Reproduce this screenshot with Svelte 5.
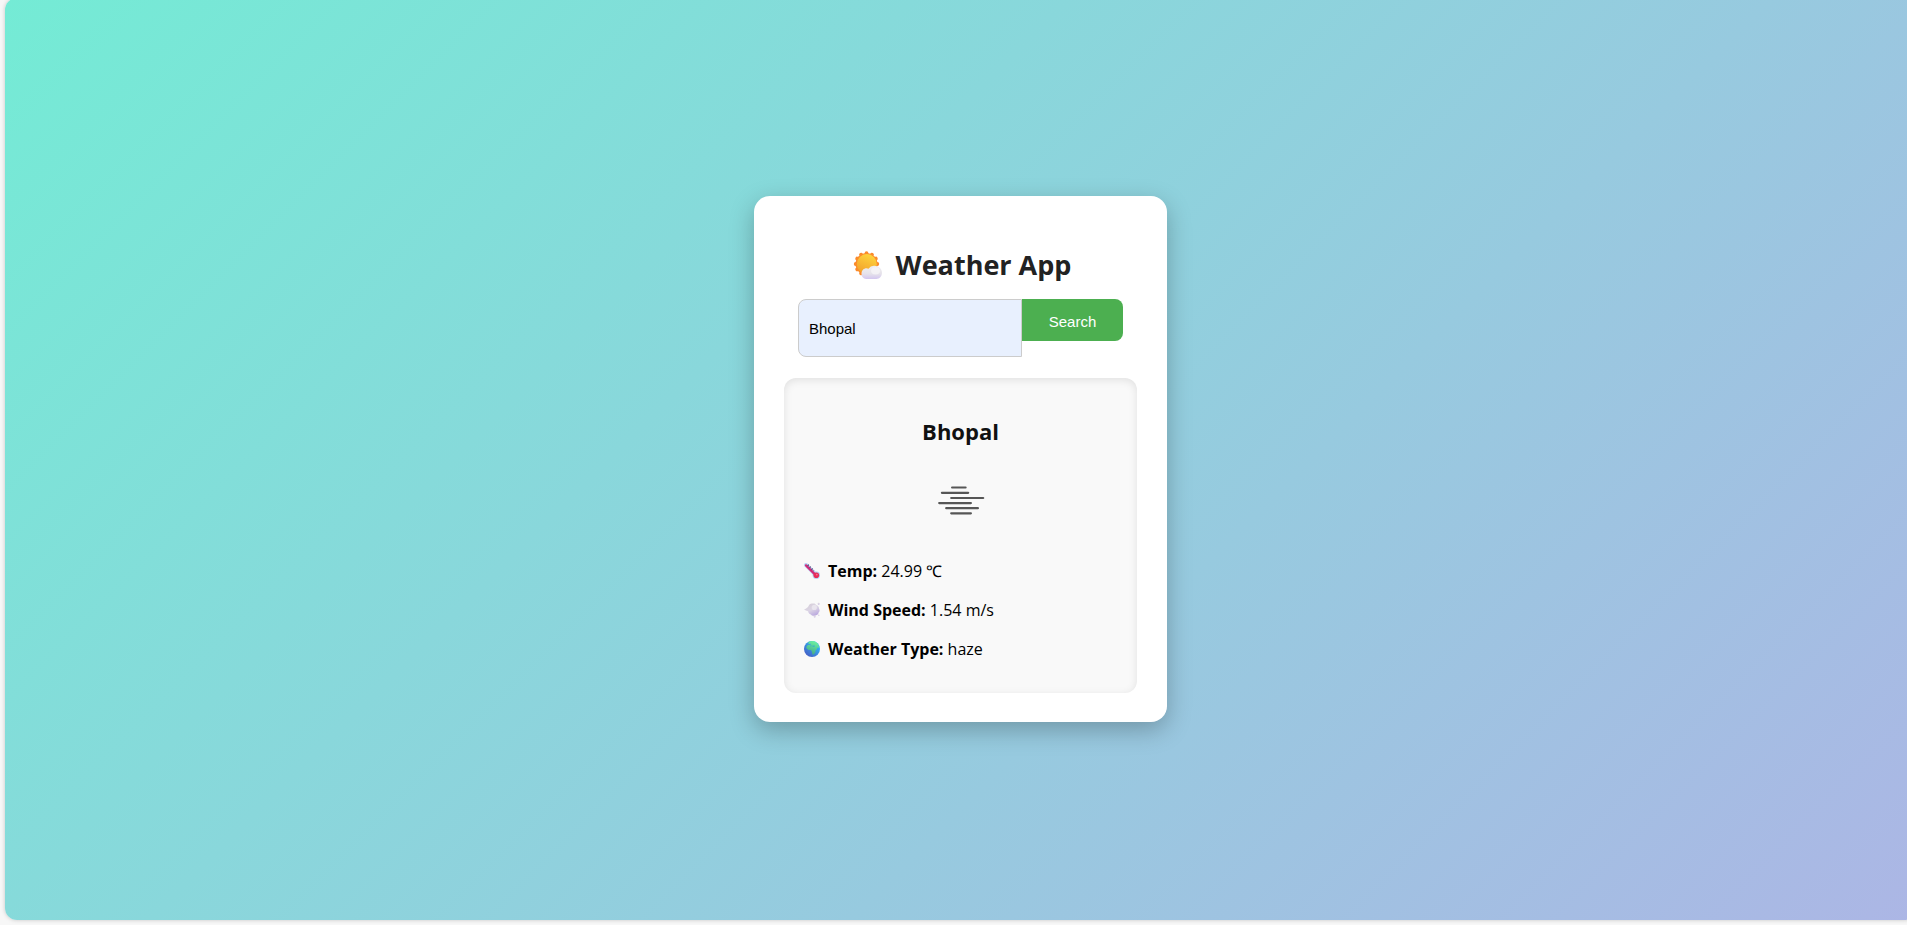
<script>
  let query = $state('Bhopal');
  let weather = $state({ city: 'Bhopal', temp: 24.99, wind: 1.54, type: 'haze' });

  function search(event) {
    event.preventDefault();
    if (query.trim()) weather.city = query.trim();
  }
</script>

<main class="page">
  <div class="backdrop">
    <section class="card">
      <h1>
        <svg class="logo" viewBox="-4 0 32 28" aria-hidden="true">
          <defs>
            <linearGradient id="sun" x1="0.7" y1="0" x2="0.3" y2="1">
              <stop offset="0" stop-color="#fed53c" />
              <stop offset="1" stop-color="#f2a02c" />
            </linearGradient>
            <linearGradient id="cloud" x1="0" y1="0" x2="0" y2="1">
              <stop offset="0" stop-color="#f0eff2" />
              <stop offset="0.6" stop-color="#e6e3ea" />
              <stop offset="1" stop-color="#d3c6f0" />
            </linearGradient>
          </defs>
          <g fill="#fb8b2b">
            <circle cx="12.5" cy="13" r="11" />
            {#each Array(12) as _, i}
              <circle cx="12.5" cy="2.2" r="1.900" transform="rotate({i * 30} 12.5 13)" />
            {/each}
          </g>
          <circle cx="12.8" cy="13" r="10" fill="url(#sun)" />
          <path d="M12 28a5 5 0 0 1-4.500-5.300c0-3.200 2.300-5.400 5-5.400 .7 0 1.400.2 2 .4a6.600 6.600 0 0 1 5.800-2.900c4.300 0 7.700 2.900 7.700 7 0 3.600-2.600 6.200-5.700 6.200z" fill="url(#cloud)" />
          <ellipse cx="21.500" cy="19.800" rx="4.500" ry="3.600" fill="#f8f7f9" opacity="0.7" />
        </svg>
        Weather App
      </h1>

      <form onsubmit={search}>
        <input type="text" aria-label="City" bind:value={query} />
        <button type="submit">Search</button>
      </form>

      <article class="result">
        <h2>{weather.city}</h2>
        <svg class="haze" viewBox="0 0 50 50" role="img" aria-label={weather.type}>
          <g stroke="#565656" stroke-width="2.200" stroke-linecap="round">
            <path d="M16.100 12.500H29.600" />
            <path d="M5.900 17.800H32.200" />
            <path d="M15.200 23H47.200" />
            <path d="M3.200 28.100H34.900" />
            <path d="M10.200 33.200H41.900" />
            <path d="M15.200 38.300H34.900" />
          </g>
        </svg>

        <p>
          <svg class="icon" viewBox="0 0 16 16" aria-hidden="true">
            <path d="M2 2l10.500 10.500" stroke="#b9d3f5" stroke-width="4" stroke-linecap="round" />
            <circle cx="12.300" cy="12.300" r="3.700" fill="#b3d0f6" />
            <path d="M2 2.400l10 10" stroke="#d02b78" stroke-width="2.200" stroke-linecap="round" />
            <path d="M3.800 1.800l6 6" stroke="#4b3b70" stroke-width="1.500" stroke-dasharray="1.200 1.500" />
            <circle cx="12.300" cy="12.300" r="2.800" fill="#e82c59" />
            <circle cx="12.800" cy="11.600" r="0.900" fill="#f47391" />
          </svg>
          <span><strong>Temp:</strong> {weather.temp} ℃</span>
        </p>
        <p>
          <svg class="icon" viewBox="0 0 16 16" aria-hidden="true">
            <defs>
              <linearGradient id="puff" x1="0.2" y1="0" x2="0.8" y2="1">
                <stop offset="0" stop-color="#d6ced8" />
                <stop offset="0.5" stop-color="#dcd5e5" />
                <stop offset="1" stop-color="#b7a4de" />
              </linearGradient>
            </defs>
            <g fill="url(#puff)">
              <path d="M0 7.400C2 7 3 6 4.500 4.300 5 2 7 1 9 1.600c1.500-.4 2.600.3 3 1.400 1.800.6 3.200 1.700 3 3.400 1 1.500.8 3.200-.4 4.200-.2 1.800-1.600 2.900-3.200 2.800-1.700.7-3.800.3-4.600-1C5.300 12 4.300 10.700 4 9.300 2.500 8.600 1.300 8 0 7.400z" />
              <circle cx="14.600" cy="1.700" r="1" />
              <circle cx="10.600" cy="14.600" r="1" />
              <circle cx="14.700" cy="13.300" r="0.700" />
            </g>
            <circle cx="10.300" cy="5.400" r="2.600" fill="#efecf2" opacity="0.700" />
          </svg>
          <span><strong>Wind Speed:</strong> {weather.wind} m/s</span>
        </p>
        <p>
          <svg class="icon" viewBox="0 0 16 16" aria-hidden="true">
            <defs>
              <linearGradient id="sea" x1="0.8" y1="0.2" x2="0.2" y2="0.9">
                <stop offset="0" stop-color="#2fb8f5" />
                <stop offset="1" stop-color="#4562c8" />
              </linearGradient>
              <linearGradient id="land" x1="0.7" y1="0" x2="0.4" y2="1">
                <stop offset="0" stop-color="#6ef3a0" />
                <stop offset="1" stop-color="#41a58c" />
              </linearGradient>
            </defs>
            <circle cx="8" cy="8" r="8" fill="url(#sea)" />
            <path d="M4.500 1.100A8 8 0 0 1 13.500 2.300l.9 1.700.8 2-1 1-1.400-.6.4 1.600-1.600 1.300-.3 2.200-1.700 2.300-1.400-.5-.3-2.800-1-1.600-2.600.1L2.200 7l.7-2.300 2-1 1.600.3.400-1.200-2.400.1z" fill="url(#land)" />
            <path d="M6.500 4.500l2 .3 2-.2.500 1-1.800.1-1.200-.6-1.800.3z" fill="#35a9cf" />
          </svg>
          <span><strong>Weather Type:</strong> {weather.type}</span>
        </p>
      </article>
    </section>
  </div>
</main>

<style>
  :global(body) {
    margin: 0;
    background: #f7f7f7;
    overflow: hidden;
  }

  .page {
    display: flex;
    min-height: 100vh;
    font-family: 'Segoe UI', 'Open Sans', sans-serif;
    color: #000;
  }

  .backdrop {
    flex: 1;
    display: flex;
    align-items: center;
    justify-content: center;
    margin: -2px -9px 5px 5px;
    border-radius: 12px;
    background: linear-gradient(135deg, #74ebd5, #acb6e5);
    box-shadow: 0 0 4px rgba(0, 0, 0, 0.2);
  }

  .card {
    box-sizing: border-box;
    width: 413px;
    padding: 49px 30px 29px;
    border-radius: 16px;
    background: #fff;
    box-shadow: 0 8px 24px rgba(0, 0, 0, 0.25);
  }

  h1 {
    display: flex;
    align-items: center;
    justify-content: center;
    gap: 14px;
    margin: 0 0 14px;
    font-size: 27px;
    line-height: 40px;
    font-weight: 700;
    color: #222;
  }

  .logo {
    width: 32px;
    height: 28px;
  }

  form {
    display: flex;
    align-items: flex-start;
    margin: 0 14px 21px;
  }

  input,
  button {
    box-sizing: border-box;
    font-family: Arial, 'Liberation Sans', sans-serif;
    font-size: 15px;
  }

  input {
    flex: 1;
    min-width: 0;
    height: 58px;
    padding: 0 10px;
    border: 1px solid #ccc;
    border-radius: 8px 0 0 8px;
    background: #e8f0fe;
    color: #000;
    outline: none;
  }

  button {
    width: 101px;
    height: 42px;
    padding: 2px 0 0;
    border: 0;
    border-radius: 0 8px 8px 0;
    background: #4caf50;
    color: #fff;
    cursor: pointer;
  }

  .result {
    padding: 37px 20px 32px;
    border-radius: 12px;
    background: #f9f9f9;
    box-shadow: inset 0 2px 8px rgba(0, 0, 0, 0.1);
  }

  h2 {
    margin: 0 0 28px;
    font-size: 22px;
    line-height: 32px;
    font-weight: 700;
    text-align: center;
    color: #111;
  }

  .haze {
    display: block;
    width: 50px;
    height: 50px;
    margin: 0 auto 34px;
  }

  p {
    display: flex;
    align-items: center;
    gap: 8px;
    margin: 0;
    font-size: 16px;
    line-height: 24px;
  }

  p + p {
    margin-top: 15px;
  }

  .icon {
    width: 16px;
    height: 16px;
  }
</style>
